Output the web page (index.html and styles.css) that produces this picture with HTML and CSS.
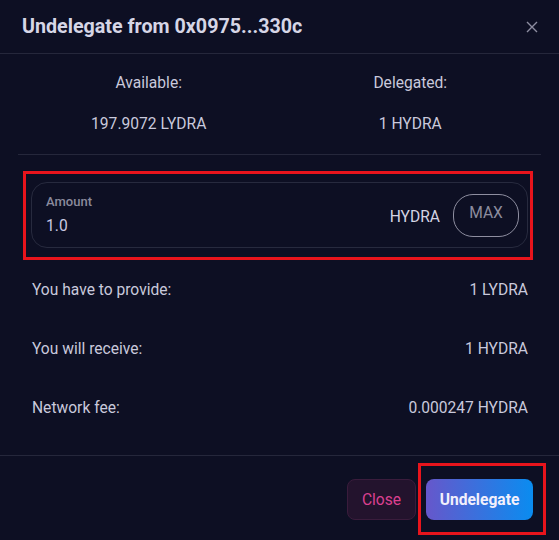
FILE: index.html
```html
<!DOCTYPE html>
<html>
<head>
<meta charset="utf-8">
<link rel="stylesheet" href="styles.css">
</head>
<body>
<div class="modal">
  <div class="header">
    <div class="title">Undelegate from 0x0975...330c</div>
    <svg class="close-x" width="12" height="12" viewBox="0 0 12 12"><path d="M1 1L11 11M11 1L1 11" stroke="#8d8da0" stroke-width="1.4" fill="none"/></svg>
  </div>
  <div class="stats">
    <div class="stat-label">Available:</div>
    <div class="stat-label">Delegated:</div>
    <div class="stat-value">197.9072 LYDRA</div>
    <div class="stat-value">1 HYDRA</div>
  </div>
  <div class="amount-box">
    <div class="amount-left">
      <div class="amount-label">Amount</div>
      <div class="amount-value">1.0</div>
    </div>
    <div class="amount-right">
      <span class="unit">HYDRA</span>
      <button class="max-btn">MAX</button>
    </div>
  </div>
  <div class="rows">
    <div class="row"><span>You have to provide:</span><span>1 LYDRA</span></div>
    <div class="row"><span>You will receive:</span><span>1 HYDRA</span></div>
    <div class="row"><span>Network fee:</span><span>0.000247 HYDRA</span></div>
  </div>
  <div class="footer">
    <button class="btn-close">Close</button>
    <button class="btn-main">Undelegate</button>
  </div>
</div>
<div class="mark mark-amount"></div>
<div class="mark mark-button"></div>
</body>
</html>
```
FILE: styles.css
```css
html, body {
  margin: 0;
  padding: 0;
  background: #0d0f23;
  font-family: Roboto, "Liberation Sans", sans-serif;
  color: #c9c9dc;
}
.modal {
  width: 559px;
  height: 540px;
  background: #0d0f23;
}
.header {
  height: 53px;
  display: flex;
  align-items: center;
  justify-content: space-between;
  padding: 0 21px 0 22px;
  border-bottom: 1px solid #25273b;
}
.title {
  font-size: 19.7px;
  font-weight: 700;
  color: #d6d6e6;
}
.close-x {
  display: block;
}
.stats {
  margin: 0 18px;
  padding: 19px 0 20px;
  display: grid;
  grid-template-columns: 1fr 1fr;
  row-gap: 21px;
  border-bottom: 1px solid #25273b;
  text-align: center;
  font-size: 15.6px;
  line-height: 20px;
}
.stat-label, .stat-value {
  color: #c9c9dc;
}
.amount-box {
  margin: 27px 31px 0;
  height: 64px;
  border: 1px solid #272a3e;
  border-radius: 16px;
  display: flex;
  align-items: center;
  justify-content: space-between;
  padding: 0 8px 0 14px;
}
.amount-left {
  display: flex;
  flex-direction: column;
  gap: 8px;
  padding-bottom: 1px;
}
.amount-label {
  font-size: 13px;
  line-height: 15px;
  color: #8a8a9c;
  font-weight: 500;
}
.amount-value {
  font-size: 15.6px;
  line-height: 18px;
  color: #c9c9e2;
}
.amount-right {
  display: flex;
  align-items: center;
  gap: 13px;
}
.unit {
  font-size: 15.6px;
  color: #d4d4e4;
  padding-top: 3px;
}
.max-btn {
  width: 66px;
  height: 43px;
  border: 1px solid #8e8ea0;
  border-radius: 20px;
  background: transparent;
  color: #8c8c9e;
  font-family: Roboto, "Liberation Sans", sans-serif;
  font-size: 15.6px;
  font-weight: 400;
  padding: 0 0 4px;
}
.rows {
  margin-top: 12px;
  padding: 0 31px 18px 32px;
}
.row {
  height: 59px;
  display: flex;
  align-items: center;
  justify-content: space-between;
  font-size: 15.6px;
  color: #c9c9dc;
}
.footer {
  border-top: 1px solid #25273b;
  display: flex;
  justify-content: flex-end;
  gap: 10px;
  padding: 23px 26px 0 0;
}
.btn-close {
  width: 69px;
  height: 41px;
  border-radius: 8px;
  border: 1px solid #3a1c3c;
  background: #23132d;
  color: #dc4090;
  font-family: Roboto, "Liberation Sans", sans-serif;
  font-size: 15.6px;
}
.btn-main {
  width: 107px;
  height: 41px;
  border-radius: 8px;
  border: none;
  background: linear-gradient(90deg, #6657cb, #0a8cf0);
  color: #f2f0fc;
  font-family: Roboto, "Liberation Sans", sans-serif;
  font-size: 15.6px;
  font-weight: 700;
}
.mark {
  position: absolute;
  border: 3px solid #e8141c;
  box-sizing: border-box;
  pointer-events: none;
}
.mark-amount {
  left: 23px;
  top: 171px;
  width: 510px;
  height: 89px;
}
.mark-button {
  left: 418px;
  top: 463px;
  width: 128px;
  height: 72px;
}
```
